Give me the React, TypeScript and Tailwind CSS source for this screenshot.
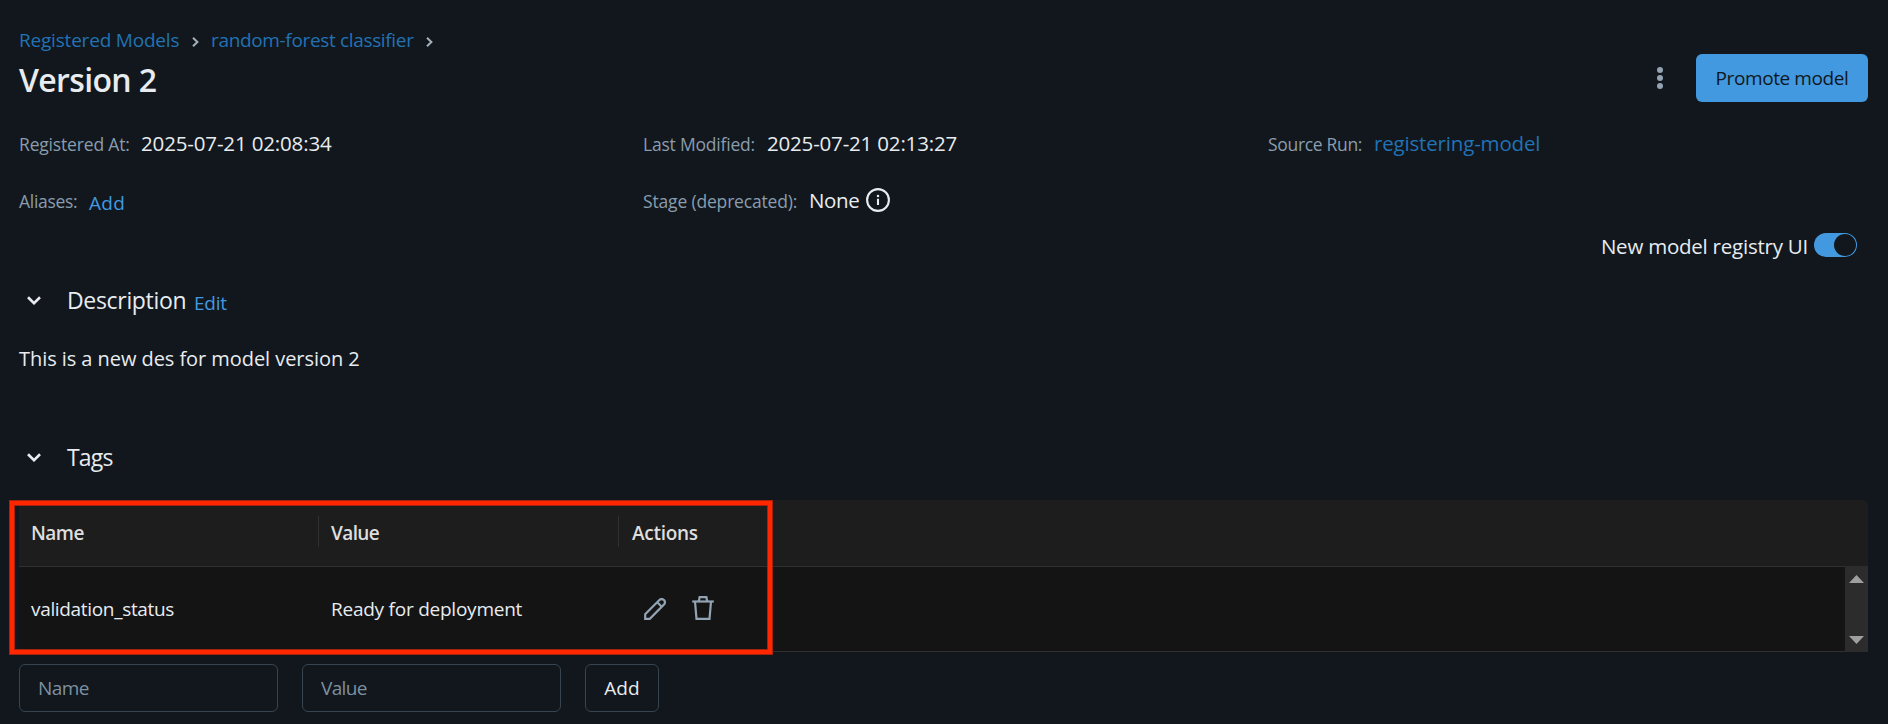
import type { ReactNode } from "react";

function Chevron({ className }: { className: string }) {
  return (
    <svg viewBox="0 0 14 9" fill="none" className={className}>
      <path d="M1 1.3 L7 7.2 L13 1.3" stroke="currentColor" strokeWidth="2.6" />
    </svg>
  );
}

function CrumbArrow() {
  return (
    <svg viewBox="0 0 7 10" fill="none" className="mt-[4px] h-[10px] w-[7px] text-[#a3b0bc]">
      <path d="M1 0.8 L5.4 5 L1 9.2" stroke="currentColor" strokeWidth="2" />
    </svg>
  );
}

function Label({ children, className }: { children: ReactNode; className: string }) {
  return <span className={`text-[17.5px] text-[#8a9dad] ${className}`}>{children}</span>;
}

export default function App() {
  return (
    <div className="flex h-[724px] w-[1888px] flex-col overflow-hidden bg-[#11171d] pr-5 pl-[19px] font-['Open_Sans','Noto_Sans',sans-serif] whitespace-nowrap text-[#e8ecf0]">
      <nav className="mt-[26px] flex h-7 items-center text-[19px] leading-7 text-[#2272b4]">
        <a className="w-[173px] tracking-[-0.2px]">Registered Models</a>
        <CrumbArrow />
        <a className="ml-3 w-[215px] tracking-[-0.34px]">random-forest classifier</a>
        <CrumbArrow />
      </nav>

      <header className="flex h-12 items-center">
        <h1 className="mt-[3px] flex-1 text-[32px] leading-10 font-semibold tracking-[-0.65px]">Version 2</h1>
        <button className="mr-[33px] flex flex-col gap-[2.4px]">
          <i className="size-[5.6px] rounded-full bg-[#92a4b3]" />
          <i className="size-[5.6px] rounded-full bg-[#92a4b3]" />
          <i className="size-[5.6px] rounded-full bg-[#92a4b3]" />
        </button>
        <button className="h-12 w-[172px] rounded-[6px] bg-[#4299e0] pt-px text-[19px] tracking-[-0.4px] text-[#11171c]">
          Promote model
        </button>
      </header>

      <section className="mt-[26px] grid grid-cols-[624px_625px_1fr] gap-y-[27px] text-[20.5px] leading-[30px]">
        <div className="flex h-[30px] items-baseline">
          <Label className="w-[122px] tracking-[-0.17px]">Registered At:</Label>
          <span className="tracking-[-0.15px]">2025-07-21 02:08:34</span>
        </div>
        <div className="flex h-[30px] items-baseline">
          <Label className="w-[124px] tracking-[-0.2px]">Last Modified:</Label>
          <span className="tracking-[-0.18px]">2025-07-21 02:13:27</span>
        </div>
        <div className="flex h-[30px] items-baseline">
          <Label className="w-[106px] tracking-[-0.32px]">Source Run:</Label>
          <a className="tracking-[-0.17px] text-[#2272b4]">registering-model</a>
        </div>
        <div className="flex h-[30px] items-start">
          <Label className="mt-px w-[70px] tracking-[-0.3px]">Aliases:</Label>
          <a className="mt-[3px] text-[19px] tracking-[0.3px] text-[#4299e0]">Add</a>
        </div>
        <div className="flex h-[30px] items-start">
          <Label className="mt-px w-[166px] tracking-[-0.17px]">Stage (deprecated):</Label>
          <span className="w-[57px] tracking-[-0.4px]">None</span>
          <svg viewBox="0 0 24 24" fill="none" className="mt-[3px] size-6">
            <circle cx="12" cy="12" r="10.9" stroke="currentColor" strokeWidth="2.1" />
            <path d="M12 10.8 V17" stroke="currentColor" strokeWidth="2.1" />
            <circle cx="12" cy="8" r="1.25" fill="currentColor" />
          </svg>
        </div>
      </section>

      <div className="mt-[16px] mr-[11px] flex h-[30px] items-start justify-end text-[20.5px] leading-[30px]">
        <span className="mr-[6px] tracking-[-0.23px]">New model registry UI</span>
        <div className="mt-[2px] flex h-6 w-[43px] justify-end rounded-full bg-[#4299e0] p-px">
          <i className="size-[22px] rounded-full bg-[#11171c]" />
        </div>
      </div>

      <div className="mt-[24px] flex h-[30px] items-baseline text-[23px] leading-[30px]">
        <Chevron className="ml-2 h-[9px] w-[14px] -translate-y-[4px]" />
        <h2 className="ml-[26px] w-[127px] tracking-[-0.32px]">Description</h2>
        <a className="translate-y-px text-[19px] tracking-[-0.25px] text-[#4299e0]">Edit</a>
      </div>
      <p className="mt-[29px] h-[30px] text-[20px] leading-[30px] tracking-[-0.06px]">This is a new des for model version 2</p>

      <div className="mt-[68px] flex h-[30px] items-baseline text-[23px] leading-[30px]">
        <Chevron className="ml-2 h-[9px] w-[14px] -translate-y-[4px]" />
        <h2 className="ml-[26px] tracking-[-0.8px]">Tags</h2>
      </div>

      <div className="relative mt-7 flex h-[152px] flex-col text-[19px]">
        <div className="flex h-[67px] items-center rounded-t-[6px] border-b border-[#303030] bg-[#1d1d1d] font-semibold text-[#dedede]">
          <span className="ml-3 w-[287px] tracking-[-0.55px]">Name</span>
          <i className="h-[31px] w-px -translate-y-[2px] bg-[#303030]" />
          <span className="ml-3 w-[287px] tracking-[-0.6px]">Value</span>
          <i className="h-[31px] w-px -translate-y-[2px] bg-[#303030]" />
          <span className="ml-[13px] tracking-[-0.27px]">Actions</span>
        </div>
        <div className="flex h-[85px] bg-[#141414]">
          <div className="flex flex-1 items-center border-b border-[#303030]">
            <span className="ml-3 w-[300px] tracking-[-0.33px]">validation_status</span>
            <span className="w-[313px] tracking-[-0.24px]">Ready for deployment</span>
            <svg viewBox="0 0 22 22" fill="none" stroke="#92a4b3" strokeWidth="2.2" className="h-[22px] w-[22px]">
              <path d="M1.2 20.8 V16.2 L15.6 1.8 Q17.9 0.2 20 2 Q21.8 4.1 20.2 6.4 L5.8 20.8 Z" />
              <path d="M13.2 4.3 L17.7 8.8" />
            </svg>
            <svg viewBox="0 0 22 24" fill="none" stroke="#92a4b3" strokeWidth="2.2" className="ml-[26px] h-6 w-[22px] -translate-y-px">
              <path d="M0.2 5.5 H21.8" />
              <path d="M6.8 5.5 L7.6 1.2 H14.4 L15.2 5.5" />
              <path d="M3 5.5 L4.5 22.8 H17.5 L19 5.5" />
            </svg>
          </div>
          <div className="-mt-px flex w-[23px] flex-col items-center justify-between bg-[#2c2c2c] pt-[9px] pb-2">
            <svg viewBox="0 0 15 8" className="h-2 w-[15px]"><path d="M7.5 0 L15 8 H0 Z" fill="#9f9f9f" /></svg>
            <svg viewBox="0 0 15 8" className="h-2 w-[15px]"><path d="M0 0 H15 L7.5 8 Z" fill="#9f9f9f" /></svg>
          </div>
        </div>
        <div className="absolute top-0 -left-[10px] h-[155px] w-[764px] border border-[#a3230f]">
          <div className="h-full w-full border-4 border-[#ff2600]">
            <div className="h-full w-full border border-[#a3230f]" />
          </div>
        </div>
      </div>

      <form className="mt-3 flex h-12 text-[19px]">
        <input
          placeholder="Name"
          className="h-12 w-[259px] rounded-[6px] border border-[#37444f] bg-transparent px-[18px] tracking-[-0.6px] placeholder:text-[#7d90a0]"
        />
        <input
          placeholder="Value"
          className="ml-6 h-12 w-[259px] rounded-[6px] border border-[#37444f] bg-transparent px-[18px] tracking-[-0.65px] placeholder:text-[#7d90a0]"
        />
        <button type="button" className="ml-6 h-12 w-[74px] rounded-[6px] border border-[#37444f]">
          Add
        </button>
      </form>
    </div>
  );
}
